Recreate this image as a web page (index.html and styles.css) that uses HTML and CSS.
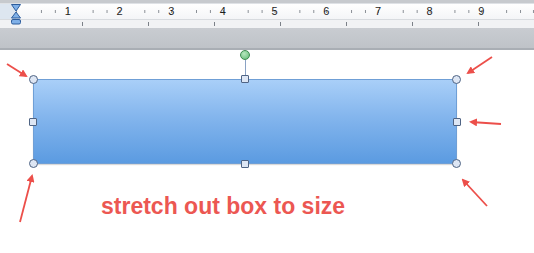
FILE: index.html
```html
<!DOCTYPE html>
<html>
<head>
<meta charset="utf-8">
<link rel="stylesheet" href="styles.css">
</head>
<body>
<div class="ruler">
  <div class="ruler-top"></div>
  <div class="ruler-main">
    <div class="ruler-margin"></div>
    <div class="ruler-scale">
      <span class="num">1</span><span class="num">2</span><span class="num">3</span><span class="num">4</span><span class="num">5</span><span class="num">6</span><span class="num">7</span><span class="num">8</span><span class="num">9</span>
    </div>
  </div>
  <div class="ruler-tabs"></div>
  <svg class="indent" width="12" height="22" viewBox="0 0 12 22">
    <path d="M1.5 1.5 H10.5 L6 8 Z" fill="#7fb0e8" stroke="#2d5c9c" stroke-width="1"/>
    <path d="M6 9 L10.5 15 H1.5 Z" fill="#7fb0e8" stroke="#2d5c9c" stroke-width="1"/>
    <rect x="1.5" y="16.5" width="9" height="4.5" rx="1.5" fill="#7fb0e8" stroke="#2d5c9c" stroke-width="1"/>
  </svg>
</div>
<div class="band"></div>
<div class="canvas">
  <div class="shape">
    <span class="rot-line"></span>
    <span class="rot"></span>
    <span class="h c tl"></span><span class="h c tr"></span><span class="h c bl"></span><span class="h c br"></span>
    <span class="h s tm"></span><span class="h s bm"></span><span class="h s ml"></span><span class="h s mr"></span>
  </div>
  <p class="caption">stretch out box to size</p>
  <svg class="arrows" width="534" height="203" viewBox="0 0 534 203">
    <defs>
      <marker id="ah" markerWidth="8" markerHeight="8" refX="6" refY="4" orient="auto" markerUnits="userSpaceOnUse">
        <path d="M0 0 L8 4 L0 8 Z" fill="#ec4f4a"/>
      </marker>
    </defs>
    <g stroke="#ec4f4a" stroke-width="1.8" fill="none" marker-end="url(#ah)">
      <line x1="7" y1="14" x2="26" y2="26"/>
      <line x1="492" y1="7" x2="468" y2="23"/>
      <line x1="501" y1="74" x2="471" y2="72"/>
      <line x1="20" y1="172" x2="32" y2="126"/>
      <line x1="487" y1="156" x2="463" y2="130"/>
    </g>
  </svg>
</div>
</body>
</html>
```
FILE: styles.css
```css
html, body {
  margin: 0;
  padding: 0;
  background: #ffffff;
  width: 534px;
  height: 253px;
  overflow: hidden;
  font-family: "Liberation Sans", Arial, sans-serif;
}

.ruler {
  position: relative;
  height: 28px;
  background: #f1f2f4;
}

.ruler-top {
  height: 3px;
  background: #c7cace;
  border-bottom: 1px solid #dfe2e6;
}

.ruler-main {
  display: flex;
  height: 15px;
  background: linear-gradient(#ffffff, #f4f5f7);
  border-bottom: 1px solid #d8dbdf;
}

.ruler-margin {
  width: 16px;
  background: #dde6f0;
}

.ruler-scale {
  flex: 1;
  display: flex;
  padding-left: 26px;
  background-image:
    repeating-linear-gradient(90deg, transparent 0, transparent 12.4px, #8a8f96 12.4px, #8a8f96 13.4px, transparent 13.4px, transparent 12.925px);
  background-size: 51.7px 3px;
  background-position: 13px 6px;
  background-repeat: repeat-x;
}

.num {
  width: 51.7px;
  flex: none;
  text-align: center;
  font-size: 11px;
  line-height: 15px;
  color: #1e1e1e;
}

.ruler-tabs {
  height: 8px;
  background-image:
    repeating-linear-gradient(90deg, transparent 0, transparent 65px, #7c8188 65px, #7c8188 66px);
  background-size: 100% 4px;
  background-position: 17px 2px;
  background-repeat: no-repeat;
}

.indent {
  position: absolute;
  left: 10px;
  top: 3px;
}

.band {
  height: 20px;
  background: linear-gradient(#c9ccd1, #bfc3c8);
  border-bottom: 2px solid #a9aeb4;
}

.canvas {
  position: relative;
  height: 203px;
  padding-top: 29px;
  box-sizing: border-box;
}

.shape {
  position: relative;
  margin-left: 33px;
  width: 424px;
  height: 85px;
  box-sizing: border-box;
  border: 1px solid #6f9fd6;
  background: linear-gradient(#a9cff8, #83b5ed 45%, #5b9be1);
  box-shadow: 0 1px 1px rgba(0, 0, 0, 0.15);
}

.h {
  position: absolute;
  box-sizing: border-box;
  background: #dde6f4;
  border: 1px solid #4f6484;
}

.c {
  width: 9px;
  height: 9px;
  border-radius: 50%;
}

.s {
  width: 8px;
  height: 8px;
  border-radius: 1px;
}

.tl { left: -5px; top: -5px; }
.tr { right: -5px; top: -5px; }
.bl { left: -5px; bottom: -5px; }
.br { right: -5px; bottom: -5px; }
.tm { left: 207px; top: -5px; }
.bm { left: 207px; bottom: -5px; }
.ml { left: -5px; top: 38px; }
.mr { right: -5px; top: 38px; }

.rot-line {
  position: absolute;
  left: 211px;
  top: -20px;
  width: 1px;
  height: 17px;
  background: #8aa2c4;
}

.rot {
  position: absolute;
  left: 206px;
  top: -30px;
  width: 10px;
  height: 10px;
  border-radius: 50%;
  box-sizing: border-box;
  background: radial-gradient(circle at 40% 35%, #b8e8c0, #5fb873);
  border: 1px solid #3e8a52;
}

.caption {
  margin: 29px 0 0 101px;
  font-size: 23px;
  line-height: 26px;
  font-weight: bold;
  color: #ec5752;
}

.arrows {
  position: absolute;
  left: 0;
  top: 0;
}
```
